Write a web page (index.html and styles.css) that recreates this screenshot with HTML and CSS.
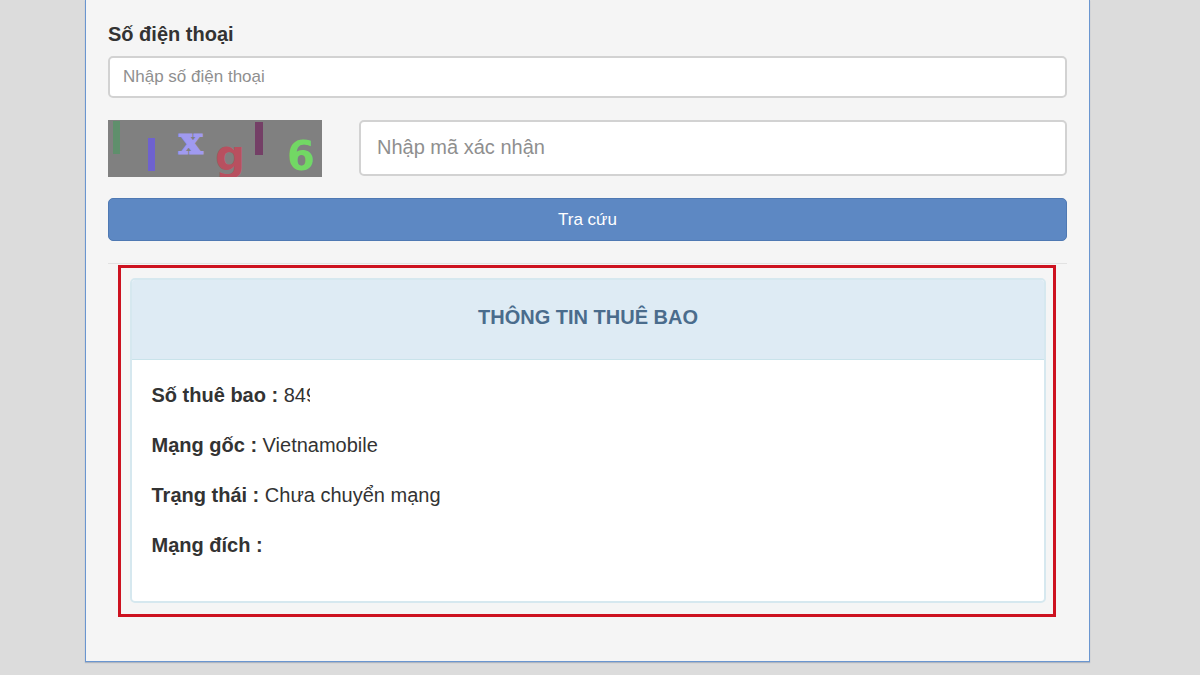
FILE: index.html
```html
<!DOCTYPE html>
<html lang="vi">
<head>
<meta charset="utf-8">
<title>Tra cứu thuê bao</title>
<link rel="stylesheet" href="styles.css">
</head>
<body>
<main class="panel">
  <form class="form">
    <label class="label" for="phone">Số điện thoại</label>
    <input class="input input-sm" id="phone" type="text" placeholder="Nhập số điện thoại">
    <div class="captcha-row">
      <svg class="captcha" width="214" height="57" viewBox="0 0 214 57" role="img" aria-label="captcha">
        <rect width="214" height="57" fill="#808080"/>
        <rect x="5" y="1" width="7" height="33" fill="#5f8f6c"/>
        <rect x="40" y="18" width="7" height="33" fill="#6e62cf"/>
        <rect x="147" y="2" width="8" height="33" fill="#743f66"/>
        <text x="71" y="34" class="cap-x">x</text>
        <text x="107" y="50" class="cap-g">g</text>
        <text x="179" y="50" class="cap-6">6</text>
      </svg>
      <input class="input input-lg" type="text" placeholder="Nhập mã xác nhận">
    </div>
    <button class="button" type="button">Tra cứu</button>
  </form>
  <hr class="divider">
  <section class="highlight">
    <div class="card">
      <h2 class="card-title">THÔNG TIN THUÊ BAO</h2>
      <div class="card-body">
        <p class="row"><b>Số thuê bao :</b> <span class="clipped">849</span></p>
        <p class="row"><b>Mạng gốc :</b> Vietnamobile</p>
        <p class="row"><b>Trạng thái :</b> Chưa chuyển mạng</p>
        <p class="row"><b>Mạng đích :</b></p>
      </div>
    </div>
  </section>
</main>
</body>
</html>
```

FILE: styles.css
```css
* { box-sizing: border-box; }
html, body { margin: 0; height: 100%; }
body {
  background: #dcdcdc;
  font-family: "Liberation Sans", Arial, sans-serif;
  color: #333;
  overflow: hidden;
}
.panel {
  width: 1005px;
  height: 662px;
  margin-left: 85px;
  padding: 23px 22px 0 22px;
  background: #f5f5f5;
  border: 1px solid #6a96d0;
  border-top: 0;
  box-shadow: 0 1px 1px rgba(90, 110, 140, .35);
}
.form { display: flex; flex-direction: column; }
.label {
  font-size: 20px;
  line-height: 22px;
  font-weight: 700;
  margin-bottom: 11px;
}
.input {
  display: block;
  background: #fff;
  border: 2px solid #d2d2d2;
  border-radius: 5px;
  font-family: inherit;
  outline: 0;
}
.input::placeholder { color: #8f8f8f; opacity: 1; }
.input-sm { height: 42px; padding: 0 13px; font-size: 17px; }
.input-lg { flex: 1; height: 56px; padding: 0 16px 2px; font-size: 20px; }
.captcha-row {
  display: flex;
  align-items: flex-start;
  gap: 37px;
  margin-top: 22px;
  height: 57px;
}
.captcha { display: block; flex: none; }
.cap-x { font: 700 40px "DejaVu Serif", serif; fill: #a09af0; stroke: #a09af0; stroke-width: 1.2px; }
.cap-g { font: 700 42px "DejaVu Sans", sans-serif; fill: #b8505f; }
.cap-6 { font: 700 40px "DejaVu Sans", sans-serif; fill: #72d864; }
.button {
  height: 43px;
  margin-top: 21px;
  background: #5d88c3;
  border: 1px solid #4f79b3;
  border-radius: 5px;
  color: #fff;
  font-family: inherit;
  font-size: 17px;
}
.divider {
  height: 1px;
  margin: 22px 0 0;
  border: 0;
  background: #e2e2e2;
}
.highlight {
  margin: 1px 11px 0 10px;
  height: 352px;
  padding: 10px 7px 0 9px;
  border: 3px solid #cd1220;
}
.card {
  height: 325px;
  background: #fff;
  border: 2px solid #d6e8ef;
  border-radius: 5px;
  overflow: hidden;
}
.card-title {
  margin: 0;
  height: 80px;
  background: #deebf4;
  border-bottom: 1px solid #c9e3ea;
  color: #4a6c8c;
  font-size: 20px;
  line-height: 74px;
  font-weight: 700;
  text-align: center;
}
.card-body {
  padding: 22px 20px 0 19.5px;
  display: flex;
  flex-direction: column;
  gap: 24px;
}
.row {
  margin: 0;
  font-size: 20px;
  line-height: 26px;
  color: #333;
}
.clipped {
  display: inline-block;
  width: 26px;
  height: 26px;
  overflow: hidden;
  vertical-align: top;
}
```
